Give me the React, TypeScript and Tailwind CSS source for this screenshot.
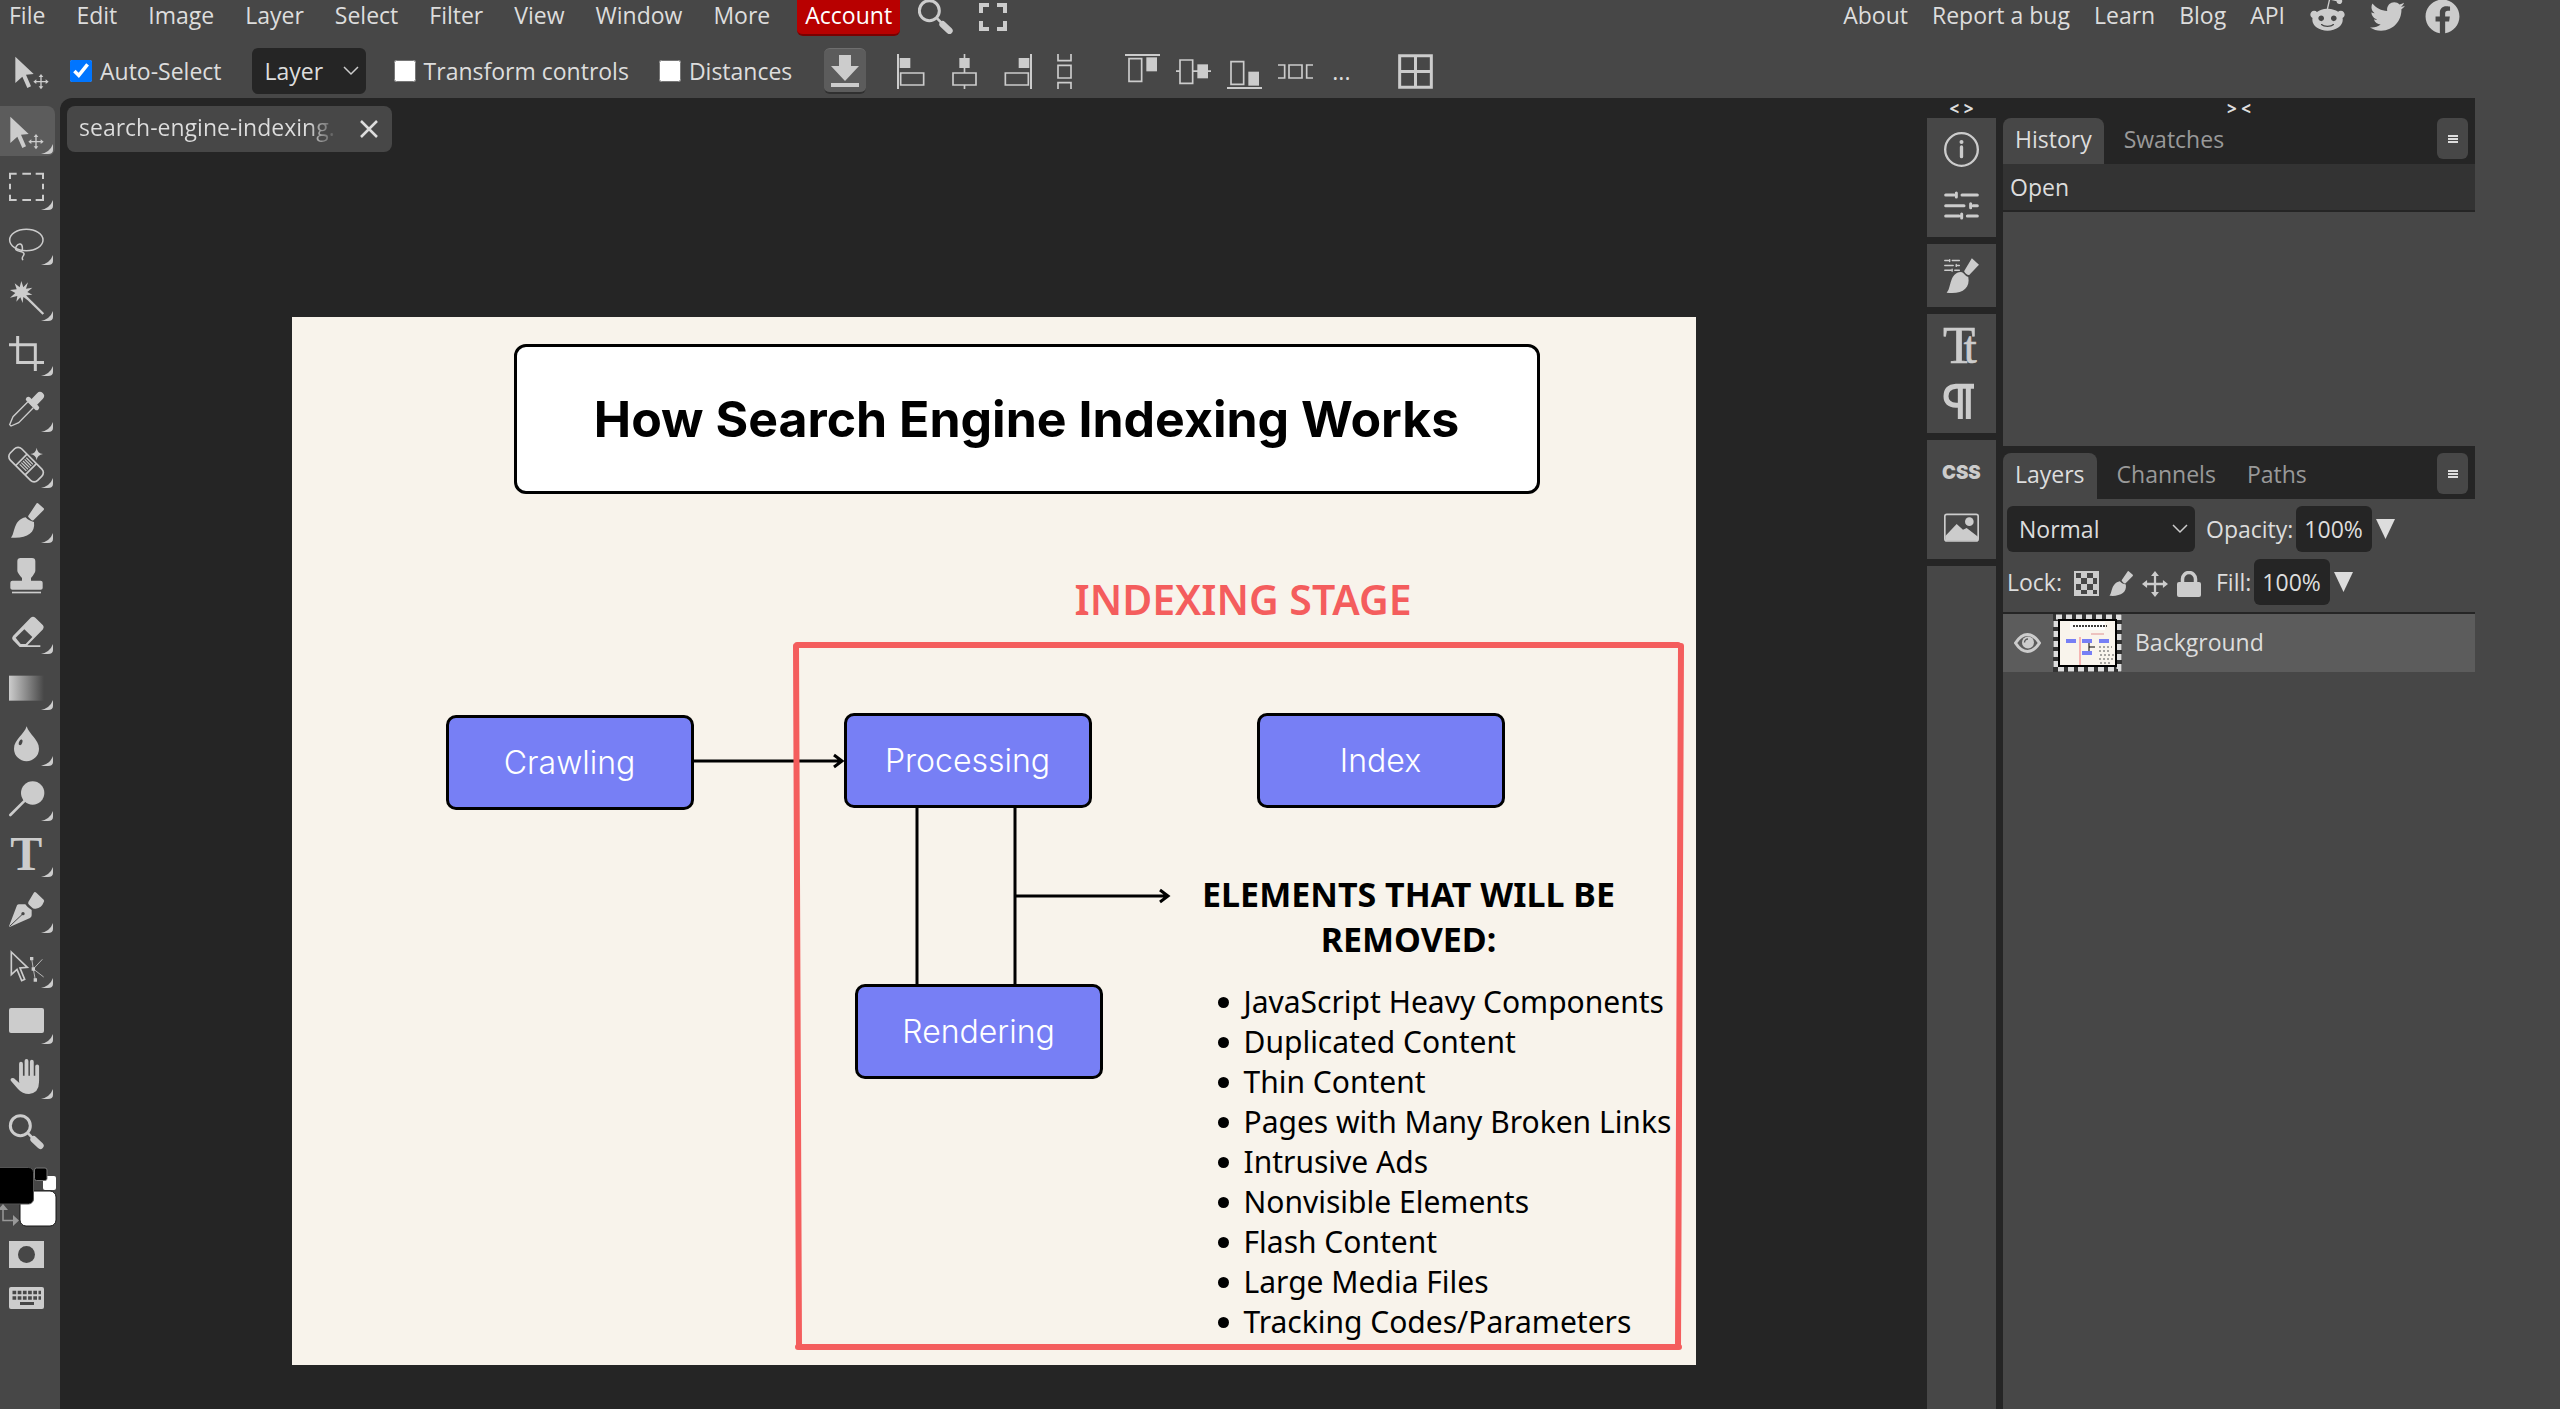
import type { ReactNode } from "react";
import { FaFacebook, FaRedditAlien, FaTwitter } from "react-icons/fa";

const menus = ["File", "Edit", "Image", "Layer", "Select", "Filter", "View", "Window", "More"];
const links = ["About", "Report a bug", "Learn", "Blog", "API"];

const removedElements = [
  "JavaScript Heavy Components",
  "Duplicated Content",
  "Thin Content",
  "Pages with Many Broken Links",
  "Intrusive Ads",
  "Nonvisible Elements",
  "Flash Content",
  "Large Media Files",
  "Tracking Codes/Parameters",
];

const Icon = ({ children, className = "size-[35px]" }: { children: ReactNode; className?: string }) => (
  <svg viewBox="0 0 105 105" className={`${className} shrink-0 overflow-visible`} fill="#cccccc" aria-hidden="true">
    {children}
  </svg>
);

const moveCross = (
  <path d="M81 60l7 9h-5v12h12v-5l9 7-9 7v-5H83v12h5l-7 9-7-9h5V85H67v5l-9-7 9-7v5h12V69h-5z" />
);

const brush = (
  <>
    <path d="M83 1Q84 -1 87 1L104 16Q106 18 104 21L74 51Q71 54 67 51L60 44Q56 41 58 38Z" />
    <path d="M6 104C18 94 12 50 50 43C56 52 66 54 75 57C80 92 50 108 6 104Z" />
  </>
);

const magnifier = (
  <>
    <circle cx="34" cy="35" r="30" fill="none" stroke="#cccccc" strokeWidth="9" />
    <path d="M55 56L72 73" stroke="#cccccc" strokeWidth="8" />
    <path d="M74 76L94 95" stroke="#cccccc" strokeWidth="20" strokeLinecap="round" />
  </>
);

const sliders = (
  <g stroke="#cccccc" strokeWidth="9" strokeLinecap="round">
    <path d="M5 21H30M54 21H100M5 53H60M88 53H100M5 84H45M70 84H100" />
    <path d="M37 15V27M80 47V59M53 78V90" />
    <path d="M30 21H36M80 53H88M45 84H52" strokeWidth="6" />
  </g>
);

const tools: { name: string; plain?: boolean; icon: ReactNode }[] = [
  {
    name: "Move tool",
    icon: (
      <>
        <path d="M4 8L59 60L36 62L51 97L40 102L25 68L4 87Z" />
        {moveCross}
      </>
    ),
  },
  {
    name: "Rectangle select",
    icon: (
      <path
        d="M23 14H3V30M40 14H66M80 14H102V30M102 44V61M102 77V93H80M66 93H40M23 93H3V77M3 61V44"
        fill="none"
        stroke="#cccccc"
        strokeWidth="6"
      />
    ),
  },
  {
    name: "Lasso select",
    icon: (
      <g fill="none" stroke="#cccccc" strokeWidth="4.5">
        <ellipse cx="52" cy="45" rx="50" ry="32" />
        <path d="M40 74C42 52 28 54 22 64C12 84 42 74 45 86C46 94 36 94 41 104" strokeLinecap="round" />
      </g>
    ),
  },
  {
    name: "Magic wand",
    icon: (
      <>
        <path d="M37 3L43 22L57 7L51 26L70 23L55 36L70 44L52 46L57 61L43 51L41 69L34 52L22 65L25 48L3 53L19 39L3 30L23 28L17 10L32 22Z" />
        <path d="M50 50L103 102" stroke="#cccccc" strokeWidth="7" />
      </>
    ),
  },
  {
    name: "Crop tool",
    icon: <path d="M26 0V79.500H105M0 26H79V105" fill="none" stroke="#cccccc" strokeWidth="9" />,
  },
  {
    name: "Eyedropper",
    icon: (
      <>
        <path d="M93 12L75 31" stroke="#cccccc" strokeWidth="24" strokeLinecap="round" />
        <path d="M58 22L83 47" stroke="#cccccc" strokeWidth="15" strokeLinecap="round" />
        <path d="M56 30L12 74L2 98L6 102L29 92L73 47" fill="none" stroke="#cccccc" strokeWidth="4" />
      </>
    ),
  },
  {
    name: "Spot healing brush",
    icon: (
      <>
        <g transform="rotate(45 52 52)" fill="none" stroke="#cccccc" strokeWidth="5">
          <rect x="-6" y="29" width="116" height="48" rx="15" />
          <path d="M32 29V77M72 29V77" />
          <path d="M38 38H66M38 45H66M38 52H66M38 59H66M38 66H66" strokeWidth="3.500" />
        </g>
        <path d="M83 2Q85 19 102 21Q85 23 83 40Q81 23 64 21Q81 19 83 2Z" />
      </>
    ),
  },
  { name: "Brush tool", icon: brush },
  {
    name: "Clone stamp",
    plain: true,
    icon: (
      <>
        <path d="M35 0H69Q79 0 79 10V38Q79 44 66 60V68H95Q101 68 101 74V90Q101 95 95 95H10Q4 95 4 90V74Q4 68 10 68H39V60Q25 44 25 38V10Q25 0 35 0Z" />
        <path d="M9 101H96V106H9Z" />
      </>
    ),
  },
  {
    name: "Eraser",
    icon: (
      <>
        <path d="M65 11Q72 6 79 11L102 34Q107 40 102 46L55 94H94V99H32L11 77Q7 72 12 66Z" />
        <path d="M46 46L70 69L50 90H35L20 71Z" fill="#474747" />
      </>
    ),
  },
  {
    name: "Gradient",
    icon: (
      <>
        <defs>
          <linearGradient id="fade">
            <stop offset="0" stopColor="#cccccc" />
            <stop offset="1" stopColor="#cccccc" stopOpacity="0" />
          </linearGradient>
        </defs>
        <rect y="17" width="105" height="75" fill="url(#fade)" />
      </>
    ),
  },
  {
    name: "Blur tool",
    icon: (
      <>
        <path d="M53 4C60 28 90 44 90 71A37 37 0 0 1 15 71C15 44 46 28 53 4Z" />
        <ellipse cx="35" cy="52" rx="5" ry="9" fill="#474747" transform="rotate(22 35 52)" />
      </>
    ),
  },
  {
    name: "Dodge tool",
    icon: (
      <>
        <circle cx="71" cy="36" r="35" />
        <path d="M48 58L4 102" stroke="#cccccc" strokeWidth="8" strokeLinecap="round" />
      </>
    ),
  },
  {
    name: "Type tool",
    icon: (
      <text x="52" y="101" fontSize="144" fontWeight="700" textAnchor="middle" className="font-['Liberation_Serif',serif]">
        T
      </text>
    ),
  },
  {
    name: "Pen tool",
    icon: (
      <>
        <path d="M74 3Q77 -2 82 2L104 23Q107 27 104 31Q98 48 80 50Q74 52 68 46L60 38Q56 35 58 30Z" />
        <path d="M24 40Q26 37 30 37H49Q52 43 68 54V70Q68 75 63 78L2 105L0 103Z" />
        <path d="M42 65L2 103" stroke="#474747" strokeWidth="3" />
        <circle cx="42" cy="65" r="5" fill="#474747" />
      </>
    ),
  },
  {
    name: "Path select",
    icon: (
      <>
        <path d="M7 12L55 58L33 60L47 94L38 98L24 64L7 80Z" fill="none" stroke="#cccccc" strokeWidth="5" />
        <path d="M68 32L73 63L79 96M100 34L73 63L104 87" fill="none" stroke="#cccccc" strokeWidth="2.500" />
        <path d="M63 27h10v10h-10zM68 58h10v10h-10zM74 91h10v10h-10z" />
      </>
    ),
  },
  { name: "Rectangle", icon: <rect y="15" width="105" height="75" rx="6" /> },
  {
    name: "Hand tool",
    icon: (
      <>
        <path
          d="M36 14V66M52.500 6V62M68.500 8V62M84.500 22V66"
          fill="none"
          stroke="#cccccc"
          strokeWidth="11.500"
          strokeLinecap="round"
        />
        <path d="M31 50V72L15 58Q8 55 5 60Q3 63 8 68L27 90Q40 105 60 105Q90 102 90 70V50Z" />
      </>
    ),
  },
  { name: "Zoom tool", plain: true, icon: magnifier },
];

const alignLeft = [
  { name: "Align left", icon: <><path d="M0 0H6V105H0Z" /><path d="M8 12H40V42H8Z" /><path d="M11 57H80V93H11Z" fill="none" stroke="#cccccc" strokeWidth="5" /></> },
  { name: "Align center", icon: <><path d="M50 0H55V105H50Z" /><path d="M37 12H68V42H37Z" /><path d="M18 57H87V93H18Z" fill="#474747" stroke="#cccccc" strokeWidth="5" /></> },
  { name: "Align right", icon: <><path d="M99 0H105V105H99Z" /><path d="M65 12H97V42H65Z" /><path d="M25 57H94V93H25Z" fill="none" stroke="#cccccc" strokeWidth="5" /></> },
  { name: "Distribute vertically", icon: <path d="M33 0V20H72V0M33 105V86H72V105M33 34H72V72H33Z" fill="none" stroke="#cccccc" strokeWidth="5" /> },
];

const alignTop = [
  { name: "Align top", icon: <><path d="M0 0H105V6H0Z" /><path d="M64 10H96V52H64Z" /><path d="M12 14H50V82H12Z" fill="none" stroke="#cccccc" strokeWidth="5" /></> },
  { name: "Align middle", icon: <><path d="M0 49H105V54H0Z" /><path d="M64 31H96V73H64Z" /><path d="M12 18H50V88H12Z" fill="#474747" stroke="#cccccc" strokeWidth="5" /></> },
  { name: "Align bottom", icon: <><path d="M0 99H105V105H0Z" /><path d="M64 53H96V95H64Z" /><path d="M12 23H50V91H12Z" fill="none" stroke="#cccccc" strokeWidth="5" /></> },
  { name: "Distribute horizontally", icon: <path d="M0 33H20V72H0M105 33H86V72H105M33 33H72V72H33Z" fill="none" stroke="#cccccc" strokeWidth="5" /> },
];

const sidePanels = [
  [
    {
      name: "Info",
      icon: (
        <>
          <circle cx="52.500" cy="52.500" r="49" fill="none" stroke="#cccccc" strokeWidth="7" />
          <circle cx="52.500" cy="30" r="6" />
          <path d="M52.500 45V74" stroke="#cccccc" strokeWidth="10" strokeLinecap="round" />
        </>
      ),
    },
    { name: "Properties", icon: sliders },
  ],
  [
    {
      name: "Brush settings",
      icon: (
        <>
          <g transform="translate(0 -2) scale(.46)">{sliders}</g>
          <g transform="translate(4 0) scale(.97 1)">
            <path d="M82 1L104 20L74 51Q66 53 58 40Z" />
            <path d="M4 104C18 94 12 50 42 43Q50 40 56 46Q62 54 71 57C78 92 50 110 4 104Z" />
          </g>
        </>
      ),
    },
  ],
  [
    {
      name: "Character",
      icon: (
        <text x="-3" y="105" fontSize="158" stroke="#cccccc" strokeWidth="2" className="font-['Liberation_Serif',serif]">
          T
          <tspan dx="-34" fontSize="140">t</tspan>
        </text>
      ),
    },
    {
      name: "Paragraph",
      icon: (
        <path
          d="M90 7H36Q6 9 6 37Q6 62 36 64H48M49 7V105M73 7V105"
          fill="none"
          stroke="#cccccc"
          strokeWidth="15"
        />
      ),
    },
  ],
  [
    {
      name: "CSS",
      icon: (
        <text x="52" y="74" fontSize="56" fontWeight="900" textAnchor="middle" className="font-[Inter,sans-serif]">
          CSS
        </text>
      ),
    },
    {
      name: "Images",
      icon: (
        <>
          <rect x="2.500" y="13" width="100" height="80" rx="6" fill="none" stroke="#cccccc" strokeWidth="5" />
          <circle cx="76" cy="35" r="13" />
          <path d="M4 78L38 42L57 59L68 54L102 80V92H4Z" />
        </>
      ),
    },
  ],
];

const Chevron = () => (
  <svg viewBox="0 0 16 10" className="pointer-events-none absolute top-1/2 right-[7px] h-[10px] w-4 -translate-y-1/2" fill="none" stroke="#cccccc" strokeWidth="1.500" aria-hidden="true">
    <path d="M1 1L8 8L15 1" />
  </svg>
);

const PanelMenu = () => (
  <button aria-label="Panel menu" className="mr-[7px] flex h-[41px] w-[31px] items-center justify-center rounded-md bg-[#474747]">
    <svg viewBox="0 0 10 8" className="h-2 w-[10px]" fill="#dddddd" aria-hidden="true">
      <path d="M0 0H10V2H0ZM0 3H10V5H0ZM0 6H10V8H0Z" />
    </svg>
  </button>
);

const Percent = ({ id, label }: { id: string; label: string }) => (
  <div className="flex items-center">
    <label htmlFor={id} className="mr-[3px]">{label}</label>
    <input id={id} defaultValue="100%" className="h-[46px] w-[76px] rounded-md bg-[#252525] px-2" />
    <button aria-label={`${label} slider`} className="ml-1">
      <svg viewBox="0 0 19 20" className="h-5 w-[19px]" fill="#dddddd" aria-hidden="true">
        <path d="M0 0H19L9.500 20Z" />
      </svg>
    </button>
  </div>
);

const TopBar = () => (
  <header className="bg-[#474747]">
    <div className="flex items-start leading-[30px]">
      <nav className="flex gap-[31px] pl-[9px]">
        {menus.map((item) => (
          <button key={item}>{item}</button>
        ))}
      </nav>
      <button className="ml-[27px] h-9 rounded-b-md border-b-2 border-[#7a0000] bg-[#b80000] px-2 pb-1 leading-[30px] text-white">
        Account
      </button>
      <button aria-label="Find" className="ml-[18px]">
        <svg viewBox="0 3 105 102" className="h-[34px] w-[35px]" fill="#cccccc" aria-hidden="true">{magnifier}</svg>
      </button>
      <button aria-label="Fullscreen" className="mt-[3px] ml-[26px]">
        <svg viewBox="0 0 28 28" className="size-7" fill="none" stroke="#cccccc" strokeWidth="4" aria-hidden="true">
          <path d="M2 10V2H10M18 2H26V10M26 18V26H18M10 26H2V18" />
        </svg>
      </button>
      <nav className="ml-auto flex items-start gap-6 pr-[100px]">
        {links.map((item) => (
          <a key={item} href="#">{item}</a>
        ))}
        <a href="#" aria-label="Reddit"><FaRedditAlien className="-mt-1 size-[37px] text-[#cccccc]" /></a>
        <a href="#" aria-label="Twitter"><FaTwitter className="-mt-px size-[35px] text-[#cccccc]" /></a>
        <a href="#" aria-label="Facebook" className="-ml-1"><FaFacebook className="-mt-px size-[35px] text-[#cccccc]" /></a>
      </nav>
    </div>
    <div className="flex h-[62px] items-center pt-2">
      <div className="ml-[14px] w-14">
        <Icon>{tools[0].icon}</Icon>
      </div>
      <label className="flex items-center gap-2">
        <input type="checkbox" defaultChecked className="size-[22px]" />
        Auto-Select
      </label>
      <div className="relative ml-[30px]">
        <select aria-label="Auto-select target" className="h-[46px] w-[114px] appearance-none rounded-md bg-[#252525] pl-[13px]">
          <option>Layer</option>
        </select>
        <Chevron />
      </div>
      <label className="ml-7 flex items-center gap-2">
        <input type="checkbox" className="size-[22px]" />
        Transform controls
      </label>
      <label className="ml-[30px] flex items-center gap-2">
        <input type="checkbox" className="size-[22px]" />
        Distances
      </label>
      <button aria-label="Save" className="ml-8 flex h-[46px] w-[42px] items-center justify-center rounded-md border-t border-b-2 border-t-[#6e6e6e] border-b-[#303030] bg-[#5c5c5c]">
        <svg viewBox="0 0 28 32" className="h-8 w-7" fill="#cccccc" aria-hidden="true">
          <path d="M8 0H20V11H28L14 26L0 11H8ZM0 28H28V32H0Z" />
        </svg>
      </button>
      <div className="ml-[31px] flex gap-[15px]">
        {alignLeft.map((item) => (
          <button key={item.name} aria-label={item.name}><Icon>{item.icon}</Icon></button>
        ))}
      </div>
      <div className="ml-[43px] flex gap-4">
        {alignTop.map((item) => (
          <button key={item.name} aria-label={item.name}><Icon>{item.icon}</Icon></button>
        ))}
      </div>
      <button className="ml-[19px]">...</button>
      <button aria-label="Grid" className="ml-12">
        <Icon>
          <path d="M5 5H100V100H5ZM52.500 5V100M5 52.500H100" fill="none" stroke="#cccccc" strokeWidth="9" />
        </Icon>
      </button>
    </div>
  </header>
);

const Toolbar = () => (
  <aside className="w-[60px] shrink-0 pt-2">
    <div className="flex h-[1051px] flex-col justify-between">
      {tools.map((tool, i) => (
        <button
          key={tool.name}
          aria-label={tool.name}
          className={`relative flex h-[50px] w-[55px] items-center rounded-r-lg pl-[9px] ${i === 0 ? "bg-[#5c5c5c]" : ""}`}
        >
          <Icon>{tool.icon}</Icon>
          {!tool.plain && (
            <svg viewBox="0 0 12 10" className="absolute right-[2px] bottom-[2px] h-[10px] w-3" fill="#cccccc" aria-hidden="true">
              <path d="M0 10Q9 8 12 0V6Q12 10 7 10Z" />
            </svg>
          )}
        </button>
      ))}
    </div>
    <svg viewBox="0 0 60 62" className="mt-[9px] block h-[62px] w-[60px]" aria-label="Foreground and background colours">
      <rect x="43" y="10" width="13" height="14" rx="2" fill="#ffffff" />
      <rect x="34.500" y="2" width="12.500" height="12.500" rx="2" stroke="#777777" />
      <rect x="20" y="25" width="36" height="35" rx="6" fill="#ffffff" stroke="#161616" />
      <rect x="-12" y="1.500" width="45.500" height="36.500" rx="5" fill="#000000" stroke="#555555" />
      <path d="M3 43V54.500H14" fill="none" stroke="#999999" strokeWidth="1.500" />
      <path d="M3 38L8 44H-2ZM13 49L19 54.500L13 60Z" fill="#999999" />
    </svg>
    <div className="mt-[13px] flex flex-col gap-[19px] pl-[9px]">
      <button aria-label="Quick mask">
        <svg viewBox="0 0 35 27" className="block h-[27px] w-[35px]" aria-hidden="true">
          <rect width="35" height="27" fill="#cccccc" />
          <circle cx="17.500" cy="13.500" r="8.500" fill="#474747" />
        </svg>
      </button>
      <button aria-label="Keyboard">
        <svg viewBox="0 0 35 22" className="block h-[22px] w-[35px]" aria-hidden="true">
          <rect width="35" height="22" rx="2" fill="#cccccc" />
          <path d="M3.500 5.500H32M3.500 11H32" stroke="#474747" strokeWidth="3.500" strokeDasharray="3.700 1.500" />
          <path d="M11 16.500H25" stroke="#474747" strokeWidth="3" />
        </svg>
      </button>
    </div>
  </aside>
);

const nodeClass =
  "absolute flex h-[95px] w-[248px] items-center justify-center rounded-[10px] border-[3px] border-black bg-[#777ff5] text-[32px] font-light text-white";

const Artboard = () => (
  <div className="relative h-[1048px] w-[1404px] overflow-hidden bg-[#f8f3eb] font-[Inter,sans-serif] text-black">
    <h1 className="absolute top-[27px] left-[222px] flex h-[150px] w-[1026px] items-center justify-center rounded-xl border-[3px] border-black bg-white text-[50px] font-bold">
      How Search Engine Indexing Works
    </h1>
    <h2 className="absolute top-[252px] left-[783px] font-['Noto_Sans',sans-serif] text-[41px] leading-[60px] font-semibold text-[#f45d5d]">
      INDEXING STAGE
    </h2>
    <div className={`${nodeClass} top-[398px] left-[154px]`}>Crawling</div>
    <div className={`${nodeClass} top-[396px] left-[552px]`}>Processing</div>
    <div className={`${nodeClass} top-[396px] left-[965px]`}>Index</div>
    <div className={`${nodeClass} top-[667px] left-[563px]`}>Rendering</div>
    <div className="absolute top-[555px] left-[902px] w-[430px] font-['Noto_Sans',sans-serif]">
      <h3 className="text-center text-[34px] leading-[45px] font-bold">
        ELEMENTS THAT WILL BE
        <br />
        REMOVED:
      </h3>
      <ul className="mt-[20px] pl-6 text-[30px] leading-10 whitespace-nowrap">
        {removedElements.map((item) => (
          <li key={item} className="flex items-center gap-[15px]">
            <span className="size-[11px] shrink-0 rounded-full bg-black" />
            {item}
          </li>
        ))}
      </ul>
    </div>
    <svg viewBox="0 0 1404 1048" className="absolute inset-0" fill="none" stroke="#000000" strokeWidth="3" aria-hidden="true">
      <path d="M401 444H550M542 438L550 444L542 450M625 491V667M723 491V667M723 579H876M868 573L876 579L868 585" />
      <path d="M505 328H1386M504 329L507 1030M1389 329L1386 1030M506 1030H1387" stroke="#f45d5d" strokeWidth="6" strokeLinecap="round" />
    </svg>
  </div>
);

const Thumbnail = () => (
  <svg viewBox="0 0 69 58" className="h-[58px] w-[69px] bg-[#333333]" aria-hidden="true">
    <rect x="3" y="3" width="63" height="52" fill="none" stroke="#dddddd" strokeWidth="5" strokeDasharray="6 4" />
    <rect x="6" y="6" width="57" height="46" fill="#f9f4ec" stroke="#000000" strokeWidth="2" />
    <path d="M17 8H52V16H17Z" fill="#ffffff" />
    <path d="M20 12H54" stroke="#000000" strokeWidth="1.500" strokeDasharray="2 1" />
    <path d="M38 20H51" stroke="#e09090" />
    <path d="M27 23V51" stroke="#f4a0a0" strokeWidth="1.500" />
    <path d="M13 25H23V29H13ZM29 25H39V29H29ZM46 25H56V29H46ZM29 37H39V41H29Z" fill="#777ff5" />
    <path d="M36 29V37M36 33H42" stroke="#000000" />
    <path d="M46 33H59M46 37H57M47 41H61M46 45H60M47 49H58" stroke="#555555" strokeDasharray="2 2" />
  </svg>
);

const RightPanels = () => (
  <div className="flex w-[472px] shrink-0 flex-col">
    <button className="h-5 pt-[2px] text-[17px] leading-[18px] font-bold">&gt; &lt;</button>
    <section>
      <div className="flex h-[46px] items-start">
        <button className="h-[46px] rounded-t-lg bg-[#474747] px-3 pb-[3px]">History</button>
        <button className="h-[46px] px-5 pb-[3px] text-[#999999]">Swatches</button>
        <div className="ml-auto"><PanelMenu /></div>
      </div>
      <div className="h-[282px] bg-[#474747]">
        <div className="h-[48px] border-b-2 border-[#252525] bg-[#333333] pl-[7px] leading-[46px]">Open</div>
      </div>
    </section>
    <section className="flex flex-1 flex-col pt-[7px]">
      <div className="flex h-[46px] items-start">
        <button className="h-[46px] rounded-t-lg bg-[#474747] px-3 pb-[3px]">Layers</button>
        <button className="h-[46px] pr-4 pb-[3px] pl-5 text-[#999999]">Channels</button>
        <button className="h-[46px] px-[15px] pb-[3px] text-[#999999]">Paths</button>
        <div className="ml-auto"><PanelMenu /></div>
      </div>
      <div className="flex-1 bg-[#474747] pt-[7px]">
        <div className="flex items-center gap-[11px] pl-1">
          <div className="relative">
            <select aria-label="Blend mode" className="h-[46px] w-[188px] appearance-none rounded-md bg-[#252525] pl-3">
              <option>Normal</option>
            </select>
            <Chevron />
          </div>
          <Percent id="opacity" label="Opacity:" />
        </div>
        <div className="mt-[7px] flex items-center pl-1">
          <span className="mr-3">Lock:</span>
          <div className="mr-[15px] flex items-center gap-[9px] pt-[3px]">
            <button aria-label="Lock transparency">
              <svg viewBox="0 0 25 25" className="size-[25px]" aria-hidden="true">
                <path d="M1 1H24V24H1Z" fill="none" stroke="#cccccc" strokeWidth="2" />
                <path d="M7 1H13V7H7ZM19 1H24V7H19ZM1 7H7V13H1ZM13 7H19V13H13ZM7 13H13V19H7ZM19 13H24V19H19ZM1 19H7V24H1ZM13 19H19V24H13Z" fill="#cccccc" />
              </svg>
            </button>
            <button aria-label="Lock pixels"><Icon className="size-[25px]">{brush}</Icon></button>
            <button aria-label="Lock position">
              <svg viewBox="58 60 46 46" className="size-[26px]" fill="#cccccc" aria-hidden="true">{moveCross}</svg>
            </button>
            <button aria-label="Lock all">
              <svg viewBox="0 0 24 26" className="h-[26px] w-6" aria-hidden="true">
                <rect y="11" width="24" height="15" rx="2" fill="#cccccc" />
                <path d="M5.500 12V8A6.500 6.500 0 0 1 18.500 8V12" fill="none" stroke="#cccccc" strokeWidth="3.500" />
              </svg>
            </button>
          </div>
          <Percent id="fill" label="Fill:" />
        </div>
        <div className="mt-[7px] flex h-[60px] items-center border-t-2 border-[#252525] bg-[#5c5c5c] pl-[11px]">
          <button aria-label="Toggle visibility" className="mr-3">
            <svg viewBox="0 0 27 20" className="h-5 w-[27px]" aria-hidden="true">
              <path d="M1.500 10Q7 1.500 13.500 1.500T25.500 10Q20 18.500 13.500 18.500T1.500 10Z" fill="none" stroke="#cccccc" strokeWidth="3" />
              <circle cx="14" cy="9.500" r="6" fill="#cccccc" />
              <path d="M10.500 9.500A3.500 3.500 0 0 1 14 6" fill="none" stroke="#5c5c5c" strokeWidth="1.500" />
            </svg>
          </button>
          <Thumbnail />
          <span className="ml-[13px] pb-[2px]">Background</span>
        </div>
      </div>
    </section>
  </div>
);

const App = () => {
  return (
    <div className="flex min-h-screen flex-col bg-[#474747] font-['Open_Sans',sans-serif] text-[23px] text-[#dddddd]">
      <TopBar />
      <div className="flex flex-1">
        <Toolbar />
        <div className="flex min-w-0 flex-1 rounded-tl-xl bg-[#252525]">
          <main className="flex flex-1 flex-col">
            <div className="flex pt-2 pl-[7px]">
              <div className="flex h-[46px] items-center rounded-lg bg-[#474747] pr-[14px] pl-3">
                <span className="w-[260px] bg-linear-to-r from-[#dddddd] from-88% to-[#474747] bg-clip-text pb-[3px] whitespace-nowrap text-transparent">
                  search-engine-indexing.
                </span>
                <button aria-label="Close" className="ml-[21px]">
                  <svg viewBox="0 0 18 18" className="size-[18px]" stroke="#dddddd" strokeWidth="2.500" aria-hidden="true">
                    <path d="M1 1L17 17M17 1L1 17" />
                  </svg>
                </button>
              </div>
            </div>
            <div className="flex flex-1 justify-center pt-[165px] pb-[44px]">
              <Artboard />
            </div>
          </main>
          <div className="flex w-[69px] shrink-0 flex-col">
            <button className="h-5 pt-[2px] text-[17px] leading-[18px] font-bold">&lt; &gt;</button>
            <div className="flex flex-1 flex-col gap-[7px]">
              {sidePanels.map((group, i) => (
                <div key={i} className="flex flex-col items-center gap-[21px] bg-[#474747] py-[14px]">
                  {group.map((item) => (
                    <button key={item.name} aria-label={item.name}><Icon>{item.icon}</Icon></button>
                  ))}
                </div>
              ))}
              <div className="flex-1 bg-[#474747]" />
            </div>
          </div>
          <div className="w-[7px] shrink-0" />
          <RightPanels />
        </div>
        <div className="w-[85px] shrink-0" />
      </div>
    </div>
  );
};

export default App;
